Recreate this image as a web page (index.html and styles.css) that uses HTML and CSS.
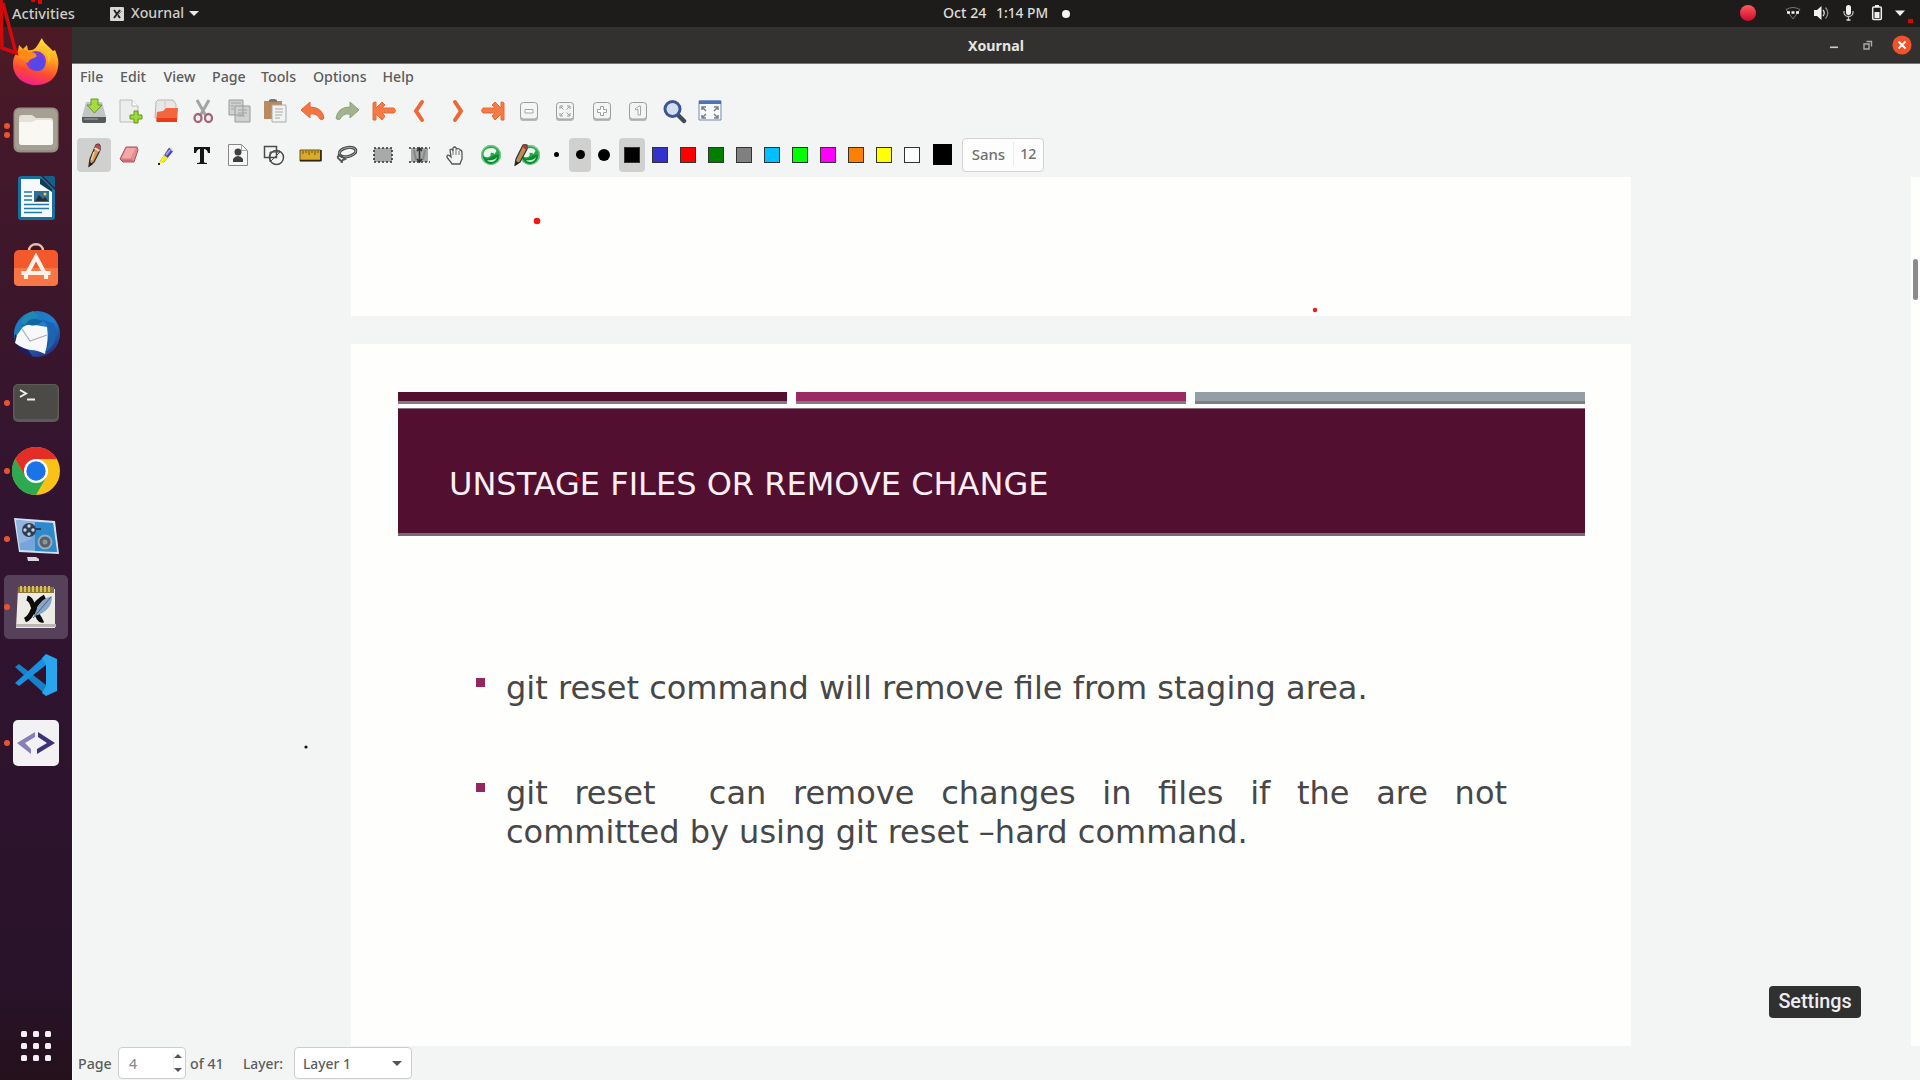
FILE: index.html
```html
<!DOCTYPE html>
<html lang="en">
<head>
<meta charset="utf-8">
<title>Xournal</title>
<link rel="stylesheet" href="styles.css">
</head>
<body>
<div class="desktop">
  <header class="topbar">
    <span class="activities">Activities</span>
    <svg class="app-mark" width="14" height="14" viewBox="0 0 14 14"><rect width="14" height="14" rx="1" fill="#d8d8d6"/><path d="M4 3l6 8M10 3l-6 8" stroke="#222" stroke-width="2"/><path d="M7 9l5-5" stroke="#888"/></svg>
    <span class="app-name">Xournal</span>
    <i class="caret light"></i>
    <div class="clock"><span>Oct 24</span><span class="time">1:14 PM</span><i class="notice"></i></div>
    <div class="tray">
      <svg width="180" height="27" viewBox="1740 0 180 27">
        <defs><linearGradient id="rec" x1="0" y1="0" x2="0" y2="1"><stop offset="0" stop-color="#ff5a60"/><stop offset="1" stop-color="#cc0a2c"/></linearGradient></defs>
        <circle cx="1748" cy="13" r="8" fill="url(#rec)"/>
        <path d="M1786 9.500q7-4 14 0l-7 9.500z" fill="none" stroke="#77756f" stroke-width="1"/>
        <path d="M1787 12.500h3M1791.500 12.500h3M1796 12.500h3" stroke="#f2f2f2" stroke-width="2.600"/>
        <path d="M1814 10h3l4.500-4v14l-4.500-4h-3z" fill="#f2f2f2"/>
        <path d="M1823 10q2.500 3 0 6" fill="none" stroke="#ddd" stroke-width="1.300"/><path d="M1825.500 7.500q4.500 5.500 0 11" fill="none" stroke="#888" stroke-width="1.300"/>
        <rect x="1846" y="5" width="5" height="10" rx="2.500" fill="#f2f2f2"/><path d="M1844 11v1.500a4.500 4 0 0 0 9 0V11M1848.500 16.500v4" fill="none" stroke="#bbb" stroke-width="1.300"/><path d="M1846.500 20h4" stroke="#ddd" stroke-width="1.500"/>
        <rect x="1872.700" y="7" width="8.600" height="12.500" rx="1" fill="none" stroke="#eee" stroke-width="1.500"/><rect x="1875" y="5" width="4" height="2" fill="#eee"/><rect x="1874.500" y="12" width="5" height="6" fill="#eee"/>
        <path d="M1895 10.500h10l-5 5.500z" fill="#f2f2f2"/>
        <rect x="1908" y="19" width="5" height="4" fill="#d00808"/>
      </svg>
    </div>
  </header>

  <div class="workspace">
    <nav class="dock">
      <div class="dock-item"><svg width="48" height="48" viewBox="0 0 48 48">
        <defs><linearGradient id="fx" x1=".7" y1="0" x2=".4" y2="1"><stop offset="0" stop-color="#ffe93a"/><stop offset=".4" stop-color="#ffa01e"/><stop offset=".72" stop-color="#ff4a32"/><stop offset="1" stop-color="#f0208a"/></linearGradient></defs>
        <path d="M30 0c1 4 5 7 8 10l3 3 2-1c3 7 4 12 3 17-1 11-10 18-22 18S1 39 1 26c0-6 2-9 5-13l1-6 4 4 4-4 1 5c4 1 7-1 9-4 2-3 3-5 5-8z" fill="url(#fx)"/>
        <circle cx="24" cy="23" r="10" fill="#7a3ed8"/><circle cx="26" cy="26" r="7" fill="#5547e8"/>
        <path d="M4 14l7-3 6 3c5 0 9 2 7 5-4 2-7 2-8 6-4-2-8-4-12-11z" fill="#ff8a16"/>
        <path d="M22 13c9-4 16 4 14 13 4-7 3-14-3-18l-5 1z" fill="#ffc32a"/></svg></div>
      <div class="dock-item"><i class="run two"></i><svg width="46" height="46" viewBox="0 0 46 46"><rect x=".5" y=".5" width="45" height="45" rx="6" fill="#969184"/><rect x="2" y="2" width="42" height="41" rx="5" fill="#a5a092"/><path d="M9 8h10l4 3h14q3 0 3 3v21q0 3-3 3H9q-3 0-3-3V11q0-3 3-3z" fill="#e5e0d8"/><path d="M6 15h13l4-2h14q3 0 3 3v19q0 3-3 3H9q-3 0-3-3z" fill="#faf8f3"/></svg></div>
      <div class="dock-item"><svg width="48" height="48" viewBox="0 0 48 48"><path d="M10 2h19l14 14v27q0 3-3 3H9q-3 0-3-3V5q0-3 4-3z" fill="#16719f"/><path d="M31 2h10q2 0 2 2v10z" fill="#12608c"/><path d="M9 5h19l12 12v26H9z" fill="#f7fafb"/><path d="M28 5v5l12 8v-3L30 5z" fill="#103c58"/><path d="M12 18h8M12 22h8M12 26h8M12 30.500h25M12 34.500h25M12 38.500h18" stroke="#227aa9" stroke-width="1.600"/><rect x="22" y="17" width="15" height="11" fill="#306f98"/><path d="M23 27l4-6 4 4 2-2 3 4z" fill="#282e34"/><circle cx="33" cy="20" r="1.500" fill="#f7d23c"/></svg></div>
      <div class="dock-item"><svg width="48" height="48" viewBox="0 0 48 48"><path d="M17 9c0-9 14-9 14 0" fill="none" stroke="#e6c1a6" stroke-width="2.500"/><rect x="2" y="8" width="44" height="36" rx="5" fill="#f4592c"/><path d="M2 26h44v14q0 4-5 4H7q-5 0-5-4z" fill="#fa7644"/><path d="M16 30l8-15 8 15M9.500 31h29M14 31v6M34 31v6" fill="none" stroke="#fff3ea" stroke-width="4.200"/></svg></div>
      <div class="dock-item"><svg width="50" height="50" viewBox="0 0 50 50"><defs><linearGradient id="tb" x1=".2" y1="0" x2=".8" y2="1"><stop offset="0" stop-color="#1f77b8"/><stop offset=".45" stop-color="#1e7fd0"/><stop offset="1" stop-color="#2b2a7c"/></linearGradient></defs><circle cx="26" cy="25" r="23" fill="url(#tb)"/><path d="M4 25c-2 12 7 21 18 23l-7-10z" fill="#211d5d"/><path d="M12 18l6-3 18 3q2 13-2 27-8-4-14-4-8-1-16-7l2-8z" fill="#f7f8fa"/><path d="M11 20l8 12 17-6" fill="none" stroke="#aaaeb5" stroke-width="1.200"/><path d="M10 18q8-12 22-6-7 6-13 4-5-1-9 2z" fill="#11659c"/><path d="M22 2q-9 3-12 12l4 2q5-8 14-8z" fill="#2089b3"/><path d="M30 10c10 6 11 22 4 33 11-5 14-22 8-29z" fill="#1a64b0"/></svg></div>
      <div class="dock-item"><i class="run"></i><svg width="46" height="38" viewBox="0 0 46 38"><rect width="46" height="38" rx="5" fill="#5d5b58"/><rect x="1.500" y="1" width="43" height="34" rx="4" fill="#4b4a47"/><path d="M7 6l6 3.500-6 3.500" fill="none" stroke="#eee" stroke-width="2"/><path d="M14 15.500h8" stroke="#eee" stroke-width="2"/></svg></div>
      <div class="dock-item"><i class="run"></i><svg width="48" height="48" viewBox="0 0 48 48"><circle cx="24" cy="24" r="24" fill="#fbc116"/><path d="M3.200 12A24 24 0 0 0 24 48L34.400 30H13.600z" fill="#2da94f"/><path d="M24 12h20.800A24 24 0 0 0 3.200 12L13.600 30z" fill="#e52d27"/><circle cx="24" cy="24" r="12" fill="#fff"/><circle cx="24" cy="24" r="9.700" fill="#1a73e8"/></svg></div>
      <div class="dock-item"><i class="run"></i><svg width="48" height="48" viewBox="0 0 48 48"><path d="M2 3l41 3 4 33-40-2z" fill="#d2e2f2"/><path d="M4 5l37 3 4 29-37-2z" fill="#74a6dc"/><path d="M23 7l18 1 4 29-22-1z" fill="#2e8ace"/><path d="M4 5l19 2-4 17L7 29z" fill="#91b4e0"/><circle cx="17" cy="15" r="7" fill="#303c50"/><g fill="#c5d3e4"><circle cx="17" cy="11" r="1.700"/><circle cx="17" cy="19" r="1.700"/><circle cx="13" cy="15" r="1.700"/><circle cx="21" cy="15" r="1.700"/></g><path d="M23 14h6" stroke="#303c50" stroke-width="2"/><circle cx="33" cy="27" r="7.500" fill="#9eaab4"/><circle cx="33" cy="27" r="5.500" fill="#57616d"/><circle cx="33" cy="27" r="2.500" fill="#899"/><path d="M15 42h9l3 2v2H16z" fill="#d5d7da"/></svg></div>
      <div class="dock-item active"><i class="run"></i><svg width="44" height="48" viewBox="0 0 44 48"><path d="M4 6h37v39H2z" fill="#ecebe6"/><path d="M2 41h40v3H2z" fill="#b9b7b2"/><path d="M4 4h36v6H4z" fill="#897638"/><path d="M7 3v6M11 3v6M15 3v6M19 3v6M23 3v6M27 3v6M31 3v6M35 3v6" stroke="#d9c04d" stroke-width="2"/><path d="M13 15q4 1 6 8l6 12q2 3 4 2M31 14q-8 4-12 13-3 8-8 10" fill="none" stroke="#0b0b0b" stroke-width="5"/><path d="M38 13q-9 2-14 10l-4 10q10-2 15-9 3-4 3-11z" fill="#8aa6c6"/><path d="M37 14L19 35" stroke="#48637e"/></svg></div>
      <div class="dock-item"><svg width="44" height="44" viewBox="0 0 44 44"><path d="M1 14l4-3 27 21v10z" fill="#1681ca"/><path d="M1 30l4 3 27-21V2z" fill="#1a8fdd"/><path d="M32 1l11 5v32l-11 5-4-3 4-7V12l-4-7z" fill="#29a5ee"/></svg></div>
      <div class="dock-item"><i class="run"></i><svg width="46" height="46" viewBox="0 0 46 46"><rect width="46" height="46" rx="5" fill="#f2f1f3"/><path d="M22 12v5L12 23l6 6v5L4 23z" fill="#8780b8"/><path d="M25 12l17 11-18 11v-5l10-6-9-6z" fill="#3c3378"/></svg></div>
      <svg class="apps" width="32" height="32" viewBox="0 0 32 32" fill="#f7eef4"><rect x="1" y="1" width="6" height="6" rx="1.500"/><rect x="13" y="1" width="6" height="6" rx="1.500"/><rect x="25" y="1" width="6" height="6" rx="1.500"/><rect x="1" y="13" width="6" height="6" rx="1.500"/><rect x="13" y="13" width="6" height="6" rx="1.500"/><rect x="25" y="13" width="6" height="6" rx="1.500"/><rect x="1" y="25" width="6" height="6" rx="1.500"/><rect x="13" y="25" width="6" height="6" rx="1.500"/><rect x="25" y="25" width="6" height="6" rx="1.500"/></svg>
    </nav>

    <main class="window">
      <div class="titlebar"><span>Xournal</span>
        <svg class="controls" width="90" height="36" viewBox="1825 27 90 36"><path d="M1830 47.300h8" stroke="#ccc" stroke-width="1.600"/><path d="M1866.500 41.500h5v5M1864 44h5v5h-5z" fill="none" stroke="#aaa" stroke-width="1.400"/><circle cx="1902" cy="45" r="9.600" fill="#f0532b"/><path d="M1898.500 41.500l7 7M1905.500 41.500l-7 7" stroke="#fff" stroke-width="1.800"/></svg>
      </div>
      <div class="menubar"><span>File</span><span>Edit</span><span>View</span><span>Page</span><span>Tools</span><span>Options</span><span>Help</span></div>

      <div class="tools">
        <svg class="t" viewBox="0 0 26 26"><path d="M5 4h16l4 15v4q0 2-2 2H3q-2 0-2-2v-4z" fill="#c3c5c4"/><path d="M1 19h24v4q0 2-2 2H3q-2 0-2-2z" fill="#555b59"/><path d="M3 21h14" stroke="#aaa"/><path d="M10 1h7v6h4l-7.500 8L6 7h4z" fill="#a5dc3c" stroke="#65962a"/></svg>
        <svg class="t" viewBox="0 0 26 26"><path d="M3 2h12l6 6v16H3z" fill="#eceeed" stroke="#b9bcba"/><path d="M15 2v6h6" fill="#fff" stroke="#b9bcba"/><path d="M17 13h4v4h4v4h-4v4h-4v-4h-4v-4h4z" fill="#a0d63a" stroke="#5d9a1d"/></svg>
        <svg class="t" viewBox="0 0 26 26"><path d="M2 4l2-2h15l3 4v14H1z" fill="#e9e7e6" stroke="#bdb3ad"/><path d="M11 3v7" stroke="#c9c9c9"/><path d="M2 23l1-9 6-1 3-3h12l-1 13q0 1-1 1H3z" fill="#f4673e"/><path d="M3 20h20v4H3z" fill="#e93a17"/></svg>
        <svg class="t" viewBox="0 0 26 26" fill="none"><path d="M7 2l9 16M19 2l-9 16" stroke="#a2a4a4" stroke-width="3"/><ellipse cx="8" cy="20" rx="3.500" ry="4" stroke="#a4647a" stroke-width="2.300"/><ellipse cx="18.500" cy="20" rx="3.500" ry="4" stroke="#a4647a" stroke-width="2.300"/></svg>
        <svg class="t" viewBox="0 0 26 26"><path d="M3 2h14v15H3zM9 8h15v16H9z" fill="#cfd1d0" stroke="#989b9a"/><path d="M5 5h10M5 8h3M5 11h3M12 12h9M12 15h9M12 18h7" stroke="#a0a3a2"/></svg>
        <svg class="t" viewBox="0 0 26 26"><path d="M2 3h18v18H2z" fill="#b98a5c"/><path d="M7 4V2l2-1h4l2 1v2z" fill="#777"/><path d="M10 7h14v17H10z" fill="#f1f2f2" stroke="#a9abab"/><path d="M13 11h8M13 14h8M13 17h7M13 20h5" stroke="#aaa"/></svg>
        <svg class="t" viewBox="0 0 26 26"><path d="M2 12l9-8v5q12 0 14 11-1 3-4 1-3-6-10-5v4z" fill="#f57540" stroke="#e0683b"/></svg>
        <svg class="t" viewBox="0 0 26 26"><path d="M24 12l-9-8v5Q3 9 1 20q1 3 4 1 3-6 10-5v4z" fill="#a3b390" stroke="#8fa07c"/></svg>
        <svg class="t" viewBox="0 0 26 26"><path d="M2 5q0-1 3-1v6l6-6 3 3-3 3h12q3 3 0 5H11l3 3-3 4-6-6v6H2z" fill="#f57a45" stroke="#e5683a"/></svg>
        <svg class="t" viewBox="0 0 26 26"><path d="M15 4L9 13l6 9" fill="none" stroke="#ee6836" stroke-width="4" stroke-linecap="round"/></svg>
        <svg class="t" viewBox="0 0 26 26"><path d="M11 4l6 9-6 9" fill="none" stroke="#ee6836" stroke-width="4" stroke-linecap="round"/></svg>
        <svg class="t" viewBox="0 0 26 26"><path d="M24 5q0-1-3-1v6l-6-6-3 3 3 3H3q-3 3 0 5h12l-3 3 3 4 6-6v6h3z" fill="#f57a45" stroke="#e5683a"/></svg>
        <svg class="t" viewBox="0 0 26 26"><use href="#key"/><path d="M9 11.500h8v3.500H9z" fill="#fff" stroke="#a3a5a4"/></svg>
        <svg class="t" viewBox="0 0 26 26"><defs><g id="key"><rect x="4" y="5" width="18" height="18" rx="3" fill="#b8bab9"/><rect x="4.500" y="4.500" width="17" height="16.500" rx="3" fill="#f4f4f3" stroke="#9c9e9d"/></g></defs><use href="#key"/><path d="M8 11V8h3M15 8h3v3M18 15v3h-3M11 18H8v-3M9 9l2.500 2.500M17 9l-2.500 2.500M17 17l-2.500-2.500M9 17l2.500-2.500" fill="none" stroke="#999"/></svg>
        <svg class="t" viewBox="0 0 26 26"><use href="#key"/><path d="M11.500 8.500h3v3h3v3h-3v3h-3v-3h-3v-3h3z" fill="#fff" stroke="#a0a2a1"/></svg>
        <svg class="t" viewBox="0 0 26 26"><use href="#key"/><path d="M10 11l4-3h1.500v9H13v-6l-2 1z" fill="#fff" stroke="#a5a7a6"/></svg>
        <svg class="t" viewBox="0 0 26 26"><path d="M17 17l6 6" stroke="#444b58" stroke-width="4.500" stroke-linecap="round"/><circle cx="11.500" cy="11" r="7.500" fill="#d3dff0" stroke="#3b5694" stroke-width="3"/></svg>
        <svg class="t" viewBox="0 0 26 26"><path d="M2 3h22v19H2z" fill="#f7f8f9" stroke="#7389b5"/><path d="M2 2.500h22V6H2z" fill="#4d73bd"/><path d="M5 12V9h4M17 9h4v3M21 17v3h-4M9 20H5v-3M6 10l3 3M20 10l-3 3M20 19l-3-3M6 19l3-3" fill="none" stroke="#7a7f82" stroke-width="1.500"/></svg>
      </div>

      <div class="tools second">
        <div class="cell pressed wide"><svg class="t" viewBox="0 0 26 26"><path d="M8 24l1-7L15 3q3-2 4 1v4l-6 12z" fill="#d89a55" stroke="#35302c" stroke-width="1.300"/><path d="M15 3q3-2 4 1v4l-5-3z" fill="#c9444b"/><path d="M13.500 6l5 3" stroke="#d8d8d8" stroke-width="2"/><path d="M13 10l-2.500 8" stroke="#f3d0a0" stroke-width="1.600"/><path d="M8 25l1-5 3 2z" fill="#222"/></svg></div>
        <svg class="t" viewBox="0 0 26 26"><path d="M9 5h11l1 3-4 12H6l-3-3z" fill="#e58c8e" stroke="#a94f55"/><path d="M9.500 6h9l-5 10H5z" fill="#f2a8a8"/><path d="M4 17.500h11l1 2H6z" fill="#c96b70"/></svg>
        <svg class="t" viewBox="0 0 26 26"><path d="M7 20l9-14 4 3-9 11z" fill="#4840ca" stroke="#444" stroke-width=".6"/><path d="M17 5l3 4" stroke="#ddd" stroke-width="2"/><path d="M6 21l5-8 4 3-5 5z" fill="#f1ef21"/><path d="M5 22h2" stroke="#222" stroke-width="2"/><path d="M13 13l4-5" stroke="#a4a5ee" stroke-width="2"/></svg>
        <svg class="t" viewBox="0 0 26 26"><path d="M5 5h16v6h-2q-1-4-4-4v13q0 1 3 1v1H8v-1q3 0 3-1V7q-3 0-4 4H5z" fill="#151515"/></svg>
        <svg class="t" viewBox="0 0 26 26"><path d="M3.500 2.500h13l6 6v15h-19z" fill="#f7f7f7" stroke="#888"/><path d="M16.500 2.500v6h6" fill="none" stroke="#aaa"/><circle cx="13" cy="10" r="3.500" fill="#3f3f3f"/><path d="M8 20v-3q2-3 5-3t5 3v3z" fill="#3f3f3f"/></svg>
        <svg class="t" viewBox="0 0 26 26" fill="none" stroke="#4b4b4b" stroke-width="1.500"><rect x="3.500" y="4.500" width="12" height="11"/><circle cx="15.500" cy="15.500" r="7"/><path d="M9 10h10L9 20z" stroke-width="1"/></svg>
        <svg class="t" viewBox="0 0 26 26"><path d="M2 8h20.500v11H2z" fill="#dbaa2a" stroke="#6b5115" stroke-width="1"/><path d="M2 18.500h21V8" fill="none" stroke="#30240c" stroke-width="1.600"/><path d="M5 9v3M8 9v2M11 9v4M14 9v2M17 9v4M20 9v2" stroke="#6b4d0d"/></svg>
        <svg class="t" viewBox="0 0 26 26" fill="none"><ellipse cx="13.500" cy="10" rx="8.500" ry="4.500" transform="rotate(-12 14 10)" stroke="#474747" stroke-width="3"/><ellipse cx="13.500" cy="10" rx="8.500" ry="4.500" transform="rotate(-12 14 10)" stroke="#bbb" stroke-width=".8"/><path d="M6 13q-4 2-1 4t3 4M6 13l5 4q-3 1-4 3" stroke="#555" stroke-width="2"/></svg>
        <svg class="t" viewBox="0 0 26 26"><path d="M4 6h18v14H4z" fill="#a9a9a9" stroke="#333" stroke-width="1.600" stroke-dasharray="2 2"/></svg>
        <svg class="t" viewBox="0 0 26 26"><path d="M5 6h17v14H5z" fill="#a6a6a6"/><path d="M3 6h21M3 20h21" stroke="#333" stroke-width="1.600" stroke-dasharray="2 2"/><path d="M8 8l2 10M19 8l-2 10" stroke="#888" stroke-width="2"/><path d="M13.500 6v14M11 9l2.500-3L16 9M11 17l2.500 3 2.500-3" fill="none" stroke="#333" stroke-width="1.600"/></svg>
        <svg class="t" viewBox="0 0 26 26"><path d="M10 22c-2-4-6-6-5-8s3 0 4 1L8 8q2-2 3 1V6q2-2 3 0l1 1q2-1 3 1 2 0 2 3v6q-1 2-2 5z" fill="#f4f4f4" stroke="#555" stroke-width="1.300"/><path d="M11 8v5M14 7v6M17 9v4" stroke="#777"/></svg>
        <svg class="t" viewBox="0 0 26 26"><defs><g id="ball"><circle cx="13" cy="13" r="10" fill="#27a94a"/><circle cx="13" cy="13" r="9.400" fill="none" stroke="#7cc890" stroke-width="1.300"/><path d="M5.500 13q0-7 8-7 4 0 5 3l-2 3q-2-2-4-1 1 3-2 4-4 1-5-2z" fill="#e9f8ec"/><path d="M5 14q3 4 7 2 6-4 9-3 0 8-8 9-6 0-8-8z" fill="#0b8a33"/><path d="M9 18q7 1 10-3-1 5-6 5-3 0-4-2z" fill="#c5edcd"/></g></defs><use href="#ball"/></svg>
        <svg class="t" viewBox="0 0 26 26"><use href="#ball" x="3"/><path d="M1 23l1-6L9 3q2-1 4 0v4L6 20z" fill="#c28c50" stroke="#333" stroke-width="1.200"/><path d="M8 4l3-2 2 2-1 4z" fill="#a33b3d"/><path d="M1 24l1-5 3 2z" fill="#222"/></svg>
        <div class="cell dot"><i class="p small"></i></div>
        <div class="cell dot pressed"><i class="p medium"></i></div>
        <div class="cell dot"><i class="p large"></i></div>
        <div class="cell swatch pressed first"><i class="c black"></i></div>
        <div class="cell swatch"><i class="c blue"></i></div>
        <div class="cell swatch"><i class="c red"></i></div>
        <div class="cell swatch"><i class="c green"></i></div>
        <div class="cell swatch"><i class="c gray"></i></div>
        <div class="cell swatch"><i class="c cyan"></i></div>
        <div class="cell swatch"><i class="c lime"></i></div>
        <div class="cell swatch"><i class="c magenta"></i></div>
        <div class="cell swatch"><i class="c orange"></i></div>
        <div class="cell swatch"><i class="c yellow"></i></div>
        <div class="cell swatch"><i class="c white"></i></div>
        <div class="current"></div>
        <div class="font"><span>Sans</span><span class="size">12</span></div>
      </div>

      <div class="canvas">
        <div class="pages">
          <div class="page previous"></div>
          <article class="page slide">
            <div class="bars"><i class="bar plum"></i><i class="bar rose"></i><i class="bar steel"></i></div>
            <h1>UNSTAGE FILES OR REMOVE CHANGE</h1>
            <ul>
              <li>git reset command will remove file from staging area.</li>
              <li><div class="justified">git reset &nbsp;can remove changes in files if the are not</div>committed by using git reset –hard command.</li>
            </ul>
          </article>
        </div>
        <div class="scroll"><i></i></div>
      </div>

      <footer class="status">
        <span class="pg">Page</span>
        <div class="spin"><span>4</span><div class="steps"><i class="up"></i><i class="caret"></i></div></div>
        <span class="of">of 41</span>
        <span class="layer">Layer:</span>
        <div class="combo"><span>Layer 1</span><i class="caret"></i></div>
      </footer>
    </main>
  </div>

  <svg class="ink" width="1920" height="1080" viewBox="0 0 1920 1080"><path d="M1 0l1 48 14 5L3 3" fill="none" stroke="#d20a0c" stroke-width="3.500"/><circle cx="33" cy="0" r="2.200" fill="#e00"/><rect x="38" y="0" width="4" height="4" fill="#e00"/><circle cx="537" cy="221" r="3.300" fill="#f01818"/><circle cx="1315" cy="310" r="2.200" fill="#f01818"/><circle cx="578" cy="479" r="2.200" fill="#d80014"/><circle cx="306" cy="747" r="1.600" fill="#111"/></svg>
  <div class="tooltip">Settings</div>
</div>
</body>
</html>
```
FILE: styles.css
```css
* { box-sizing: border-box; }
body { margin: 0; background: #f3f5f5; font-family: "Noto Sans", "Open Sans", sans-serif; font-size: 14.2px; font-weight: 500; color: #5c5c5c; }
i { display: block; font-style: normal; }
svg { display: block; flex: none; }
.desktop { position: relative; width: 1920px; height: 1080px; overflow: hidden; display: flex; flex-direction: column; }

.topbar { height: 27px; flex: none; background: #1d1c1a; color: #cfcdc9; display: flex; align-items: center; padding-left: 12px; white-space: nowrap; }
.topbar span { padding-bottom: 2px; }
.activities { width: 98px; font-size: 14.6px; }
.app-mark { margin-right: 7px; }
.app-name { width: 58px; }
.caret { width: 0; height: 0; border: 5px solid transparent; border-top: 5px solid #555; border-bottom: 0; }
.caret.light { border-top-color: #e8e8e6; }
.clock { margin-left: 744px; display: flex; align-items: center; color: #dedcd8; }
.clock span { width: 53px; }
.clock .time { font-size: 13.8px; width: 66px; }
.notice { width: 8px; height: 8px; border-radius: 50%; background: #f4f4f4; }
.tray { margin-left: auto; }

.workspace { flex: 1; display: flex; min-height: 0; }
.dock { width: 72px; flex: none; background: linear-gradient(#4c1a24 0, #44182a 120px, #3a162c 300px, #321430 460px, #2d132d 800px, #28132a 950px, #24111c 1053px); padding-top: 1px; display: flex; flex-direction: column; align-items: center; }
.dock-item { width: 64px; height: 64px; margin: 2.050px 0; flex: none; display: flex; align-items: center; justify-content: center; position: relative; border-radius: 5px; }
.dock-item.active { background: #57405a; }
.run { position: absolute; left: 0; top: 29px; width: 6px; height: 6px; border-radius: 50%; background: #e9542f; }
.run.two { top: 25px; box-shadow: 0 9px #e9542f; }
.apps { margin-top: auto; margin-bottom: 18px; }

.window { flex: 1; min-width: 0; display: flex; flex-direction: column; border-left: 1px solid #fafafa; }
.titlebar { height: 37px; margin-left: -1px; flex: none; background: #32312f; border-bottom: 1px solid #777; color: #e8e6e3; font-weight: 700; display: flex; align-items: center; padding-left: 896px; }
.controls { margin-left: auto; margin-right: 5px; }
.menubar { height: 26px; flex: none; display: grid; grid-template-columns: 40px 43.500px 48.500px 49px 52px 69.500px 60px; align-items: center; padding: 0 0 2px 7px; }
.tools { height: 42px; flex: none; display: flex; align-items: center; padding-left: 3px; }
.tools.second { height: 45px; }
.t { width: 26px; height: 26px; margin: 0 5.130px; }
.tools:not(.second) .t { margin: 0 5.140px; }
.tools.second > .t { margin: 0 5.050px; }
.cell { display: flex; align-items: center; justify-content: center; height: 34px; flex: none; border-radius: 4px; }
.cell.wide { width: 34px; margin: 0 1px; }
.pressed { background: #d0d0cf; }
.dot { width: 22px; margin: 0 .75px; }
.p { border-radius: 50%; background: #000; }
.small { width: 5px; height: 5px; }
.medium { width: 9px; height: 9px; }
.large { width: 12px; height: 12px; }
.swatch { width: 26px; margin: 0 1px; }
.swatch.first { margin-left: 3px; }
.c { width: 16px; height: 16px; border: 1px solid #333; }
.black { background: #000; } .blue { background: #3333cc; } .red { background: #f00; } .green { background: #008000; }
.gray { background: #808080; } .cyan { background: #00c0ff; } .lime { background: #0f0; } .magenta { background: #f0f; }
.orange { background: #ff8000; } .yellow { background: #ff0; } .white { background: #fff; }
.current { width: 19px; height: 21px; background: #000; margin: 0 10px 0 7px; }
.font { width: 82px; height: 34px; border: 1px solid #d4d3d1; border-radius: 4px; background: #fdfdfd; display: flex; align-items: center; padding: 0 0 1px 9px; font-size: 15px; color: #707070; }
.size { margin-left: 8px; border-left: 1px solid #ececec; padding-left: 6px; font-size: 14.2px; line-height: 24px; }

.canvas { flex: 1; min-height: 0; display: flex; overflow: hidden; }
.pages { width: 1280px; margin-left: 278px; display: flex; flex-direction: column; gap: 28px; }
.page { background: #fefefd; flex: none; }
.previous { height: 139px; }
.slide { height: 703px; padding: 48px 46.500px 0; font-family: "DejaVu Sans", sans-serif; font-weight: 400; color: #474747; }
.bars { display: grid; grid-template-columns: repeat(3, 1fr); gap: 9.500px; }
.bar { height: 12px; border-bottom: 3px solid #817c80; }
.plum { background: #520f30; } .rose { background: #9b2963; } .steel { background: #949fa4; }
h1 { margin: 4px 0 0; height: 128px; background: #520f30; border-top: 1px solid #8d6b7c; border-bottom: 3px solid #766b72; color: #fbeff5; font-size: 32px; font-weight: 400; line-height: 38px; padding: 56px 0 0 51.500px; white-space: nowrap; }
ul { margin: 133px 0 0 78.500px; padding: 0; list-style: none; font-size: 32px; line-height: 38.500px; width: 1032px; }
li { position: relative; padding-left: 30px; white-space: nowrap; margin-bottom: 66.500px; }
li::before { content: ""; position: absolute; left: 0; top: 9px; width: 9px; height: 9px; background: #93285d; }
.justified { width: 1001px; white-space: normal; text-align: justify; text-align-last: justify; }
.scroll { margin-left: auto; width: 9px; background: #fefefd; padding: 82px 1px 0 2px; }
.scroll i { height: 41px; width: 5px; border-radius: 3px; background: #8b8b8b; }

.status { height: 34px; flex: none; display: flex; align-items: center; padding: 0 0 0 5px; white-space: nowrap; }
.pg { width: 40px; }
.spin { width: 68px; height: 32px; border: 1px solid #cfcdcb; border-radius: 4px; background: #fff; padding: 0 3px 0 10px; display: flex; align-items: center; justify-content: space-between; color: #8c8c8c; }
.steps { display: flex; flex-direction: column; gap: 10px; border-left: 1px solid #eee; }
.steps .caret, .up { border: 4px solid transparent; }
.steps .caret { border-top: 4px solid #555; border-bottom: 0; }
.up { width: 0; height: 0; border-bottom: 4px solid #555; border-top: 0; }
.of { margin-left: 4px; width: 53px; }
.layer { width: 51px; }
.combo { width: 118px; height: 32px; border: 1px solid #cfcdcb; border-radius: 4px; background: #fff; padding: 0 9px 0 8px; display: flex; align-items: center; justify-content: space-between; font-size: 13.8px; }
.layer { font-size: 13.8px; }

.ink { position: absolute; left: 0; top: 0; pointer-events: none; }
.tooltip { position: absolute; left: 1769px; top: 986px; width: 92px; height: 32px; border-radius: 4px; background: #303030; color: #eee; font: 500 19.800px/32px Roboto, sans-serif; text-align: center; }
```
